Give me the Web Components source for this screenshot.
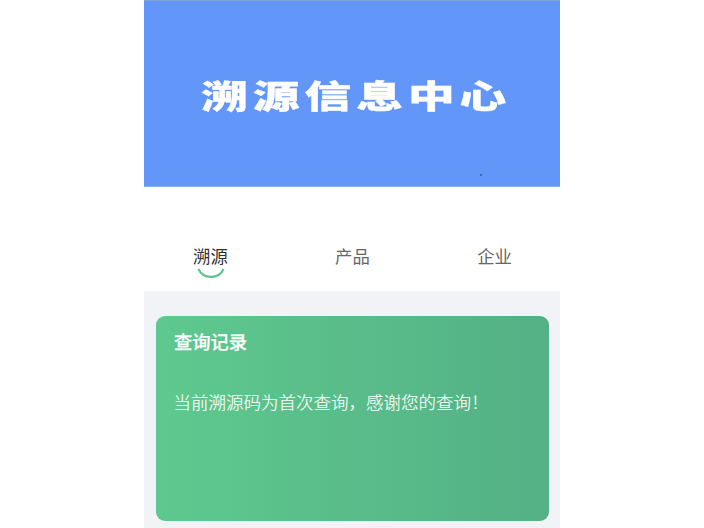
<!DOCTYPE html>
<html lang="zh">
<head>
<meta charset="utf-8">
<title>溯源信息中心</title>
<style>
html,body{margin:0;padding:0;background:#fff;height:100%;overflow:hidden;}
body{font-family:"Noto Sans CJK SC","Noto Sans",sans-serif;}
</style>
</head>
<body>
<trace-page>
    <trace-banner title-text="溯源信息中心"></trace-banner>
    <trace-tabs></trace-tabs>
    <trace-card heading="查询记录">当前溯源码为首次查询，感谢您的查询！</trace-card>
</trace-page>
<script>
customElements.define('trace-page', class extends HTMLElement {
    constructor() {
        super();
        this.attachShadow({ mode: 'open' });
        this.shadowRoot.innerHTML =
            '<style>' +
            ':host{display:flex;flex-direction:column;width:416px;height:528px;margin-left:144px;background:#f1f3f7;overflow:hidden;}' +
            '</style>' +
            '<slot></slot>';
    }
});

customElements.define('trace-banner', class extends HTMLElement {
    constructor() {
        super();
        this.attachShadow({ mode: 'open' });
    }
    connectedCallback() {
        this.shadowRoot.innerHTML =
            '<style>' +
            ':host{display:flex;align-items:center;justify-content:center;height:187px;background:#6296f8;position:relative;flex:none;box-sizing:border-box;border-top:1px solid #7f9fdc;border-bottom:1px solid #8aaef2;}' +
            '.name{color:#fff;font:900 32px/1 "Noto Sans CJK SC",sans-serif;letter-spacing:3.4px;margin:0 -3.4px 0 0;transform:translate(3px,-.5px) scaleX(1.46);white-space:nowrap;-webkit-text-stroke:.3px #fff;filter:blur(.45px);}' +
            '.dot{position:absolute;left:336px;top:173px;width:2px;height:2px;border-radius:50%;background:#3a5a9a;}' +
            '</style>' +
            '<div class="name">' + this.getAttribute('title-text') + '</div>' +
            '<span class="dot"></span>';
    }
});

customElements.define('trace-tabs', class extends HTMLElement {
    constructor() {
        super();
        this.attachShadow({ mode: 'open' });
        const tabs = ['溯源', '产品', '企业'];
        this.shadowRoot.innerHTML =
            '<style>' +
            ':host{display:flex;justify-content:space-between;height:104px;background:#fff;flex:none;box-sizing:border-box;padding:57px 48px 0 49px;font-size:17.4px;line-height:24px;color:#666;}' +
            '.tab{display:flex;flex-direction:column;align-items:center;}' +
            '.tab.on{color:#333;}' +
            'svg{display:block;margin-left:1px;}' +
            '</style>' +
            tabs.map((t, i) =>
                '<div class="tab' + (i === 0 ? ' on' : '') + '">' + t +
                (i === 0 ? '<svg width="28" height="12" viewBox="0 0 28 12"><path d="M1.5 1C6 11.5 22 11.5 26.5 1" fill="none" stroke="#5ec48f" stroke-width="2.2"/></svg>' : '') +
                '</div>').join('');
    }
});

customElements.define('trace-card', class extends HTMLElement {
    constructor() {
        super();
        this.attachShadow({ mode: 'open' });
    }
    connectedCallback() {
        this.shadowRoot.innerHTML =
            '<style>' +
            ':host{display:block;box-sizing:border-box;width:393px;height:205px;margin:25px 0 0 12px;padding:12px 18px;border-radius:9px;background:linear-gradient(90deg,#5ec98f,#54b085);color:#fff;}' +
            'h2{margin:0;font:500 18.3px/26px "Noto Sans CJK SC",sans-serif;-webkit-text-stroke:.25px #fff;}' +
            'p{margin:35px 0 0 -.5px;font:300 17.5px/26px "Noto Sans CJK SC",sans-serif;white-space:nowrap;-webkit-text-stroke:.12px #fff;}' +
            '</style>' +
            '<h2>' + this.getAttribute('heading') + '</h2>' +
            '<p><slot></slot></p>';
    }
});
</script>
</body>
</html>
